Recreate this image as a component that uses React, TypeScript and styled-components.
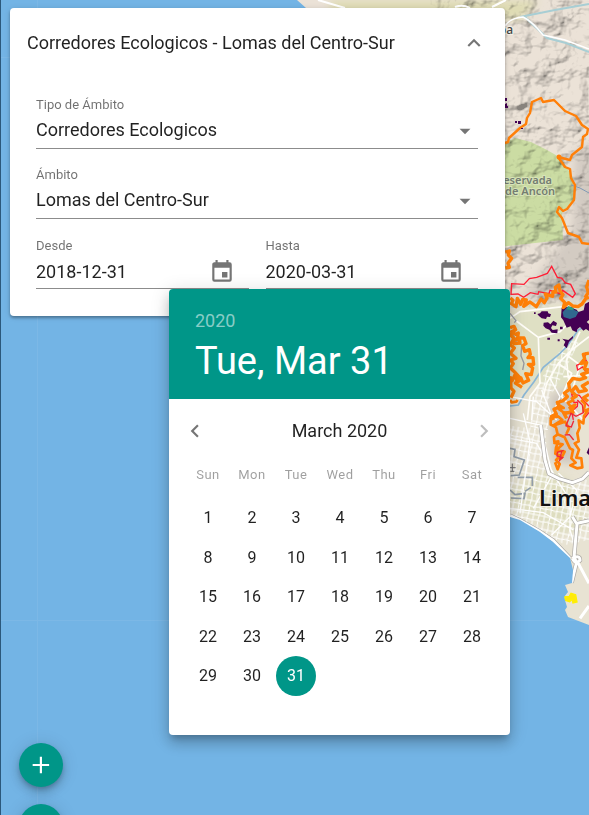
import React, { useState } from "react";
import styled, { createGlobalStyle } from "styled-components";

const GlobalStyle = createGlobalStyle`
  *, *::before, *::after { box-sizing: border-box; }
  html, body { margin: 0; padding: 0; overflow: hidden; }
  body, button, input, select { font-family: Roboto, "Liberation Sans", sans-serif; }
`;

const teal = "#009688";
const ink = "rgba(0, 0, 0, 0.87)";
const muted = "rgba(0, 0, 0, 0.54)";

const Page = styled.main`
  min-height: 100vh;
  padding: 8px 10px;
  color: ${ink};
  background: #73b4e5;
`;

const MapLayer = styled.svg`
  position: fixed;
  inset: 0;
  width: 100%;
  height: 100%;
  border-left: 1px solid #2b587b;
`;

const Relief = styled.g`
  opacity: 0.42;
  mix-blend-mode: multiply;
`;

const Panel = styled.section`
  position: relative;
  width: 100%;
  max-width: 495px;
  background: #fff;
  border-radius: 4px;
  box-shadow: 0 2px 3px rgba(0, 0, 0, 0.3), 0 1px 6px rgba(0, 0, 0, 0.12);
`;

const PanelHeader = styled.header`
  display: flex;
  align-items: center;
  justify-content: space-between;
  height: 70px;
  padding: 0 18px 0 17px;
`;

const PanelTitle = styled.h1`
  margin: 0;
  font-size: 18px;
  font-weight: 400;
  line-height: 24px;
`;

const IconButton = styled.button`
  display: flex;
  align-items: center;
  justify-content: center;
  flex: none;
  width: 26px;
  height: 26px;
  padding: 0;
  border: 0;
  background: none;
  color: ${muted};
  cursor: pointer;

  &:disabled {
    color: rgba(0, 0, 0, 0.26);
    cursor: default;
  }
`;

const Form = styled.form`
  display: flex;
  flex-direction: column;
  gap: 15px;
  padding: 16px 27px 27px 26px;
`;

const Field = styled.div`
  display: flex;
  flex-direction: column;
  flex: 1;
  min-width: 0;
`;

const Label = styled.label`
  color: rgba(0, 0, 0, 0.56);
  font-size: 13px;
  line-height: 22px;
`;

const SelectBox = styled.div`
  display: grid;
  align-items: center;
  padding-bottom: 2px;
  border-bottom: 1px solid #8c8c8c;
`;

const Select = styled.select`
  grid-area: 1 / 1;
  width: 100%;
  height: 30px;
  padding: 0 0 4px;
  border: 0;
  outline: 0;
  appearance: none;
  background: none;
  color: ${ink};
  font-size: 18px;
`;

const Arrow = styled.svg`
  grid-area: 1 / 1;
  justify-self: end;
  width: 26px;
  height: 26px;
  fill: #757575;
  pointer-events: none;
`;

const DateRow = styled.div`
  position: relative;
  display: flex;
  gap: 17px;
  margin-top: 1px;
`;

const DateBox = styled.div`
  display: flex;
  align-items: center;
  height: 32px;
  padding: 0 14px 2px 0;
  border-bottom: 1px solid #8c8c8c;
`;

const DateInput = styled.input`
  flex: 1;
  min-width: 0;
  height: 28px;
  padding: 0;
  border: 0;
  outline: 0;
  background: none;
  color: ${ink};
  font-size: 18px;
`;

const Picker = styled.div`
  position: absolute;
  z-index: 2;
  top: 100%;
  right: -32px;
  width: 341px;
  overflow: hidden;
  background: #fff;
  border-radius: 4px;
  box-shadow: 0 6px 6px -3px rgba(0, 0, 0, 0.2), 0 9px 13px 1px rgba(0, 0, 0, 0.14),
    0 3px 18px 2px rgba(0, 0, 0, 0.12);
`;

const PickerHeader = styled.header`
  display: flex;
  flex-direction: column;
  align-items: flex-start;
  height: 110px;
  padding: 20px 26px;
  background: ${teal};
`;

const YearButton = styled.button`
  padding: 0;
  border: 0;
  background: none;
  color: rgba(255, 255, 255, 0.54);
  font-size: 18px;
  line-height: 24px;
`;

const DateButton = styled(YearButton)`
  margin-top: 5px;
  color: #fff;
  font-size: 38px;
  line-height: 46px;
`;

const MonthNav = styled.div`
  display: flex;
  align-items: center;
  justify-content: space-between;
  height: 64px;
  padding: 0 13px;
`;

const MonthTitle = styled.h2`
  margin: 0;
  font-size: 18px;
  font-weight: 400;
  line-height: 24px;
`;

const Calendar = styled.table`
  display: block;
  padding: 0 16px 0 17px;
`;

const Head = styled.thead`
  display: block;
  margin-bottom: 11px;
`;

const Body = styled.tbody`
  display: grid;
  grid-template-rows: repeat(6, 1fr);
  height: 237px;
`;

const Week = styled.tr`
  display: grid;
  grid-template-columns: repeat(7, 1fr);
  align-items: center;
`;

const DayName = styled.th`
  padding: 0;
  color: rgba(0, 0, 0, 0.38);
  font-size: 13px;
  font-weight: 400;
  letter-spacing: 0.5px;
  line-height: 24px;
  text-align: center;
`;

const DayCell = styled.td`
  display: flex;
  justify-content: center;
  align-items: center;
  height: 39px;
  padding: 0;
`;

const Day = styled.button<{ $selected: boolean }>`
  flex: none;
  width: 40px;
  height: 40px;
  padding: 0;
  border: 0;
  border-radius: 50%;
  background: ${(p) => (p.$selected ? teal : "transparent")};
  color: ${(p) => (p.$selected ? "#fff" : ink)};
  font-size: 16px;
  cursor: pointer;
`;

const Actions = styled.nav`
  position: fixed;
  top: calc(100vh - 72px);
  left: 19px;
  display: flex;
  flex-direction: column;
  gap: 17px;
`;

const Fab = styled.button`
  display: flex;
  align-items: center;
  justify-content: center;
  width: 44px;
  height: 44px;
  padding: 0;
  border: 0;
  border-radius: 50%;
  background: ${teal};
  color: #fff;
  box-shadow: 0 3px 5px -1px rgba(0, 0, 0, 0.2), 0 6px 10px rgba(0, 0, 0, 0.14),
    0 1px 18px rgba(0, 0, 0, 0.12);
`;

const icons = {
  up: "M7.41 15.41L12 10.83l4.59 4.58L18 14l-6-6-6 6z",
  left: "M15.41 16.58L10.83 12l4.58-4.59L14 6l-6 6 6 6z",
  right: "M8.59 16.58L13.17 12 8.59 7.41 10 6l6 6-6 6z",
  calendar:
    "M19 19H5V8h14m-3-7v2H8V1H6v2H5c-1.11 0-2 .89-2 2v14a2 2 0 0 0 2 2h14a2 2 0 0 0 2-2V5a2 2 0 0 0-2-2h-1V1m-1 11h-5v5h5z",
  plus: "M19.5 13h-6.6v6.6h-2V13H4.3v-2h6.6V4.4h2V11h6.6z",
  minus: "M19.5 13H4.3v-2h15.2z",
};

function Icon({ name }: { name: keyof typeof icons }) {
  return (
    <svg width="26" height="26" viewBox="0 0 24 24" fill="currentColor" aria-hidden="true">
      <path d={icons[name]} />
    </svg>
  );
}

function SelectField({ id, label, options }: { id: string; label: string; options: string[] }) {
  return (
    <Field>
      <Label htmlFor={id}>{label}</Label>
      <SelectBox>
        <Select id={id}>
          {options.map((o) => (
            <option key={o}>{o}</option>
          ))}
        </Select>
        <Arrow viewBox="0 0 24 24" aria-hidden="true">
          <path d="M7 10l5 5 5-5z" />
        </Arrow>
      </SelectBox>
    </Field>
  );
}

function DateField({ id, label, value }: { id: string; label: string; value: string }) {
  return (
    <Field>
      <Label htmlFor={id}>{label}</Label>
      <DateBox>
        <DateInput id={id} value={value} readOnly />
        <IconButton type="button" aria-label={`Abrir calendario: ${label}`}>
          <Icon name="calendar" />
        </IconButton>
      </DateBox>
    </Field>
  );
}

const weekdays = ["Sun", "Mon", "Tue", "Wed", "Thu", "Fri", "Sat"];
const weeks = [0, 1, 2, 3, 4].map((w) =>
  weekdays.map((_, d) => w * 7 + d + 1).filter((n) => n <= 31)
);

function DatePicker({ day, onPick }: { day: number; onPick: (n: number) => void }) {
  return (
    <Picker role="dialog" aria-label="Hasta">
      <PickerHeader>
        <YearButton type="button">2020</YearButton>
        <DateButton type="button">
          {weekdays[(day - 1) % 7]}, Mar {day}
        </DateButton>
      </PickerHeader>
      <MonthNav>
        <IconButton type="button" aria-label="Previous month">
          <Icon name="left" />
        </IconButton>
        <MonthTitle>March 2020</MonthTitle>
        <IconButton type="button" aria-label="Next month" disabled>
          <Icon name="right" />
        </IconButton>
      </MonthNav>
      <Calendar>
        <Head>
          <Week>
            {weekdays.map((d) => (
              <DayName key={d} scope="col">
                {d}
              </DayName>
            ))}
          </Week>
        </Head>
        <Body>
          {weeks.map((week) => (
            <Week key={week[0]}>
              {week.map((n) => (
                <DayCell key={n}>
                  <Day type="button" $selected={n === day} onClick={() => onPick(n)}>
                    {n}
                  </Day>
                </DayCell>
              ))}
            </Week>
          ))}
        </Body>
      </Calendar>
    </Picker>
  );
}

const land =
  "M297 0L306 8L340 40L430 200L505 508L510 517L520 520L540 532L553 542L570 558L573 570L572 583L565 585L568 592L564 597L567 607L565 610L568 617L589 625V0Z";

const mainRoads =
  "M152 75L165 180L177 221L207 236L247 248L277 237L297 217M60 347L90 361L147 393L189 421L240 475M247 350L261 373L252 473L260 486L245 548M262 370L297 362M247 475Q270 463 270 481Q257 496 247 475";

function TerrainMap() {
  return (
    <MapLayer viewBox="0 0 589 815" preserveAspectRatio="xMaxYMin slice" aria-hidden="true">
      <defs>
        <filter id="relief" x="0" y="0" width="100%" height="100%">
          <feTurbulence type="fractalNoise" baseFrequency="0.034 0.042" numOctaves="4" seed="12" />
          <feColorMatrix values="0 0 0 0 0 0 0 0 0 0 0 0 0 0 0 1 0 0 0 0" />
          <feDiffuseLighting surfaceScale="15" diffuseConstant="1.2" lightingColor="#ffffff">
            <feDistantLight azimuth="225" elevation="56" />
          </feDiffuseLighting>
        </filter>
        <filter id="soft" x="-20%" y="-20%" width="140%" height="140%">
          <feGaussianBlur stdDeviation="4" />
        </filter>
        <clipPath id="land">
          <path d={land} />
        </clipPath>
        <pattern id="blocks" width="11" height="13" patternUnits="userSpaceOnUse" patternTransform="rotate(12)">
          <path d="M0 2H11M0 8L6 7L11 8M2 0V13M8 0L7 7L8 13" fill="none" stroke="#fff" strokeWidth="1" />
        </pattern>
      </defs>
      <rect width="589" height="815" fill="#73b4e5" />
      <path d="M37.5 0V815M0 57.5H589M0 620.5H589" stroke="#7cb8e6" strokeWidth="1" />
      <g clipPath="url(#land)">
        <rect x="290" width="299" height="640" fill="#ebe2d7" />
        <path d="M330 0H540L520 20H330Z" fill="#dfdcb4" filter="url(#soft)" />
        <path d="M575 150L600 140V300H520L560 245L572 235Z" fill="#d3cbc2" filter="url(#soft)" />
        <path
          d="M500 145L515 138L531 142L547 150L561 158L573 178L574 199L562 213L563 240L535 243L500 247Z"
          fill="#cbdca3"
        />
        <Relief>
          <rect x="430" width="159" height="308" filter="url(#relief)" />
        </Relief>
        <path d="M505 312L540 306L600 304V380L556 398L540 440L505 430Z" fill="#dfe0c4" filter="url(#soft)" />
        <path d="M500 400L540 382L575 395L600 400V650H500Z" fill="#e8e3d3" filter="url(#soft)" />
        <path d="M500 495L545 470L570 480L589 525L560 535L525 515Z" fill="#deddbf" filter="url(#soft)" />
        <path d="M550 395L575 385V465L552 460Z" fill="#cdc6be" filter="url(#soft)" />
        <path d="M505 425L545 430L550 478L589 480V540L565 545L505 510Z" fill="url(#blocks)" />
        <path d="M535 390L552 360L570 340L580 340L560 380L548 400V430H530Z" fill="url(#blocks)" />

        <path d="M318 0L345 8M455 7Q463 4 470 8M492 7L506 0" stroke="#fff" strokeWidth="2" fill="none" />
        <path d="M520 17L555 10L589 4M525 17L547 38L566 43L589 52" stroke="#a8ced4" strokeWidth="2" fill="none" />
        <path d="M505 26Q510 18 523 17Q532 21 543 35L565 40L589 49" stroke="#fff" strokeWidth="1.5" fill="none" />
        <path d="M571 185L580 188L589 193" stroke="#8299b4" fill="none" />

        <g transform="translate(490 250) scale(0.33333)" fill="none">
          <path d="M60 468L85 465L102 435L132 395L160 352L205 315L230 290L265 240L297 225" stroke="#8ab6d5" strokeWidth="5" />
          <g stroke="#fffdf8" strokeWidth="5">
            <path d="M60 205L90 185L220 170M75 210L145 262L150 400L120 440L112 510M145 262L210 245L230 225M297 260L245 300L205 340L170 400L160 440M220 380L297 375M205 340L245 370L215 440L280 510M230 315L270 345L250 410M270 245L230 330L235 385" />
          </g>
          <path d="M60 440L140 455L200 510M130 440L125 510M155 420L190 510M180 385L210 440L180 510" stroke="#fff" strokeWidth="4" />
          <path d="M60 190L78 212L73 218M65 243L78 275L95 285L93 318L102 340L98 360" stroke="#9799a0" strokeWidth="4" />
          <g fill="#440154">
            <path d="M142 192L150 190L155 184H173L175 190L183 193L180 201L171 200L168 207L155 205L147 198Z" />
            <path d="M215 174L236 170L260 179L265 186L281 181L285 162L297 155V210L290 216L297 222V243L288 237L280 242L270 231L262 238L260 247L247 241L242 229L230 233L220 211L213 202Z" />
            <path d="M161 218L174 217L181 223L190 212L201 219L198 228L187 226L183 234L188 240L203 238L202 250L185 248L178 239L167 235L160 227ZM132 187h5v5h-5ZM210 230h8v8h-8ZM217 266L235 270L249 258V264L237 276L230 295L221 286L226 275ZM172 263h8v6h-8ZM203 268h6v6h-6Z" />
          </g>
          <path d="M218 187L232 170H247L253 180L266 185L257 201L240 207L221 201Z" fill="#31688e" />
          <path d="M230 178L235 169L251 174L248 181Z" fill="#2a9d80" />
          <g stroke="#ff1e35" strokeWidth="4">
            <path d="M63 133L65 101L102 103L118 86L140 82L172 70L185 49L202 82L215 84L226 99L242 103L256 131L248 142L218 121L212 132L180 121L177 131L146 125L144 133L121 128L101 142L84 132Z" />
            <path d="M289 307L283 323L289 332L260 346L263 360L278 351L286 363L297 357M297 469L276 446L268 436L245 432L252 458L263 456L262 469L245 484L250 510M279 510L297 487" />
          </g>
          <g stroke="#ff8008" strokeWidth="10" strokeLinejoin="round">
            <path d="M46 6L58 3L55 15L65 25L54 40L58 52L46 54" />
            <path d="M61 144L69 151L64 161L78 170L82 145L92 163L98 148L109 150L101 169L120 156L139 170L153 147L163 158L171 144L166 132L188 139L189 125L198 126L196 112L207 105L210 123L219 134L212 145L224 157L220 173L235 158L249 168L264 170L276 162L288 145L297 142M297 90L290 111L295 127L285 143" />
            <path d="M60 233L72 229L77 239L64 245L77 253L85 249L82 269L70 266L73 281L90 279L88 264L102 264L108 281L98 287L104 304L118 299L121 313L114 323L129 323L131 343L115 343L128 354L124 374L107 371L116 391L99 399L93 384L81 394L76 372L67 392L62 383L63 414L72 424L63 443M96 412L76 399L95 389L73 365L61 354L70 341L62 330L78 325L61 310L73 294L61 284L72 265L61 255L74 242" />
            <path d="M297 309L280 313L284 326L273 340L290 338L283 356L297 361M297 365L275 373L287 383L269 389L249 385L236 401L239 418L223 429L232 440L218 453L202 457L208 470L192 478L199 492L185 499L190 510M297 396L277 408L289 421L267 426L257 410L245 424L259 438L243 448M238 470L249 487L221 489L230 505M297 433L281 443L294 454" />
          </g>
        </g>

        <g transform="translate(490 400) scale(0.33333)" fill="none">
          <path d="M60 145L75 148L72 170L103 180L88 225L62 227M83 232H127V258M60 270L75 284L105 280L102 296L63 294M105 274L122 263" stroke="#929da8" strokeWidth="5" />
          <path d="M60 55L150 75L185 215L240 300L240 390L255 440M60 115L140 130L190 220L130 325M60 325L160 338L250 390M100 40L120 125L90 340M205 220L260 270L240 350L185 405" stroke="#fff" strokeWidth="4" />
          <path d={mainRoads} stroke="#aaa7a3" strokeWidth="13" />
          <path d={mainRoads + "M265 490L297 550M270 655L297 618"} stroke="#fff" strokeWidth="9" />
          <g stroke="#ff8008" strokeWidth="8" strokeLinejoin="round">
            <path d="M214 0L203 13L221 24L206 27L226 41L246 32L256 14L242 20L233 8L253 0M273 0L285 12L281 34L297 27L282 48L280 70L266 61L269 83L262 100L266 124L254 130L267 149L259 173L274 175L277 202L261 205L241 196L257 188L244 175L249 150L240 145L224 112L203 103L192 111L193 126L205 124L198 143L196 161L210 166L198 180L209 192L203 208L195 187M203 103L198 82L182 74V54L204 49L217 60L189 77L225 65L237 85L229 102M190 128L218 133L199 151L224 155L215 173L201 176" />
            <path d="M60 0L65 7L79 5L83 0" />
          </g>
          <path d="M262 0L277 15L280 38L258 49L243 40L236 57L228 77L244 81L251 62M224 105L238 104L251 120M221 151L202 157L201 168L218 173L209 181L215 154" stroke="#ee2737" strokeWidth="4" />
          <path d="M297 142L290 158L297 165Z" fill="#440154" />
          <path d="M67 191V214M57 203H77M61 214H73" stroke="#6f6f72" strokeWidth="3" />
          <path d="M224 590L238 589L243 580L257 584L261 606L249 609L246 598L239 605L225 601Z" fill="#ffe90b" stroke="#fff000" strokeWidth="4" />
        </g>

        <path
          d="M505 143L508 142L509 138L520 128L526 124L527 118L530 113L532 102L541 98L543 102L554 100L565 111L576 116L582 125L588 129L587 134L583 137L582 147L572 155L570 160L558 157L565 167L570 169L571 178L575 185L574 200L567 209L563 211L559 207L557 212L562 218L568 233L579 237L582 243L589 244"
          fill="none"
          stroke="#ff7f08"
          strokeWidth="2.4"
          strokeLinejoin="round"
        />
        <circle cx="559" cy="157" r="2.5" fill="#ff7f08" />
        <path d="M505 98h2v3h-2zM505 104l2-1v3h1v2h-3zM515 121h2v2h-2zM518 121h3v3h-3zM521 128h2v1h-2z" fill="#440154" />
      </g>
      <g fontFamily="'Noto Sans', sans-serif" strokeWidth="2" paintOrder="stroke">
        <text x="513" y="34" textAnchor="end" fontSize="12" fontWeight="500" fill="#444" stroke="#f4f0e6">
          pa
        </text>
        <text fontSize="11" fontWeight="600" fill="#747d71" textAnchor="end" stroke="#d8e4b9">
          <tspan x="552" y="184">
            eservada
          </tspan>
          <tspan x="555" y="195">
            de Ancón
          </tspan>
        </text>
        <text x="539" y="506" fontSize="22" fontWeight="600" fill="#111" stroke="#f4f0e6">
          Lima
        </text>
      </g>
    </MapLayer>
  );
}

export default function App() {
  const [day, setDay] = useState(31);
  return (
    <>
      <GlobalStyle />
      <Page>
        <TerrainMap />
        <Panel>
          <PanelHeader>
            <PanelTitle>Corredores Ecologicos - Lomas del Centro-Sur</PanelTitle>
            <IconButton type="button" aria-label="Contraer panel">
              <Icon name="up" />
            </IconButton>
          </PanelHeader>
          <Form>
            <SelectField id="tipo" label="Tipo de Ámbito" options={["Corredores Ecologicos"]} />
            <SelectField id="ambito" label="Ámbito" options={["Lomas del Centro-Sur"]} />
            <DateRow>
              <DateField id="desde" label="Desde" value="2018-12-31" />
              <DateField id="hasta" label="Hasta" value="2020-03-31" />
              <DatePicker day={day} onPick={setDay} />
            </DateRow>
          </Form>
        </Panel>
        <Actions aria-label="Zoom">
          <Fab type="button" aria-label="Acercar">
            <Icon name="plus" />
          </Fab>
          <Fab type="button" aria-label="Alejar">
            <Icon name="minus" />
          </Fab>
        </Actions>
      </Page>
    </>
  );
}
